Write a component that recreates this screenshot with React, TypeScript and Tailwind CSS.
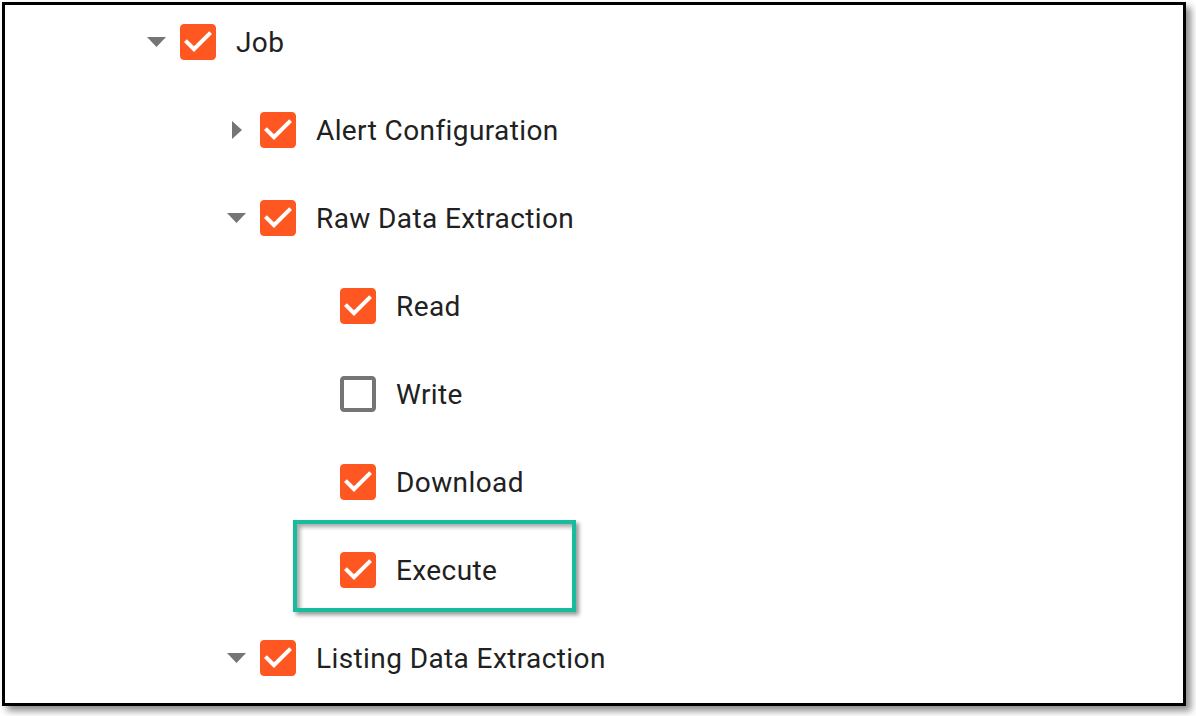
import React from "react";

type Node = {
  label: string;
  level: 0 | 1 | 2;
  checked: boolean;
  arrow?: "down" | "right";
  highlight?: boolean;
};

// rows of the permission tree, top to bottom
const rows: Node[] = [
  { label: "Job", level: 0, checked: true, arrow: "down" },
  { label: "Alert Configuration", level: 1, checked: true, arrow: "right" },
  { label: "Raw Data Extraction", level: 1, checked: true, arrow: "down" },
  { label: "Read", level: 2, checked: true },
  { label: "Write", level: 2, checked: false },
  { label: "Download", level: 2, checked: true },
  { label: "Execute", level: 2, checked: true, highlight: true },
  { label: "Listing Data Extraction", level: 1, checked: true, arrow: "down" },
];

const levelPad = ["pl-[127px]", "pl-[207px]", "pl-[287px]"];

const Checkbox: React.FC<{ checked: boolean }> = ({ checked }) =>
  checked ? (
    <svg width="36" height="36" viewBox="3 3 18 18" className="shrink-0">
      <path
        fill="#ff5722"
        d="M19 3H5c-1.11 0-2 .9-2 2v14c0 1.1.89 2 2 2h14c1.11 0 2-.9 2-2V5c0-1.1-.89-2-2-2zm-9 14l-5-5 1.41-1.41L10 14.17l7.59-7.59L19 8l-9 9z"
      />
    </svg>
  ) : (
    <svg width="36" height="36" viewBox="3 3 18 18" className="shrink-0">
      <path
        fill="#757575"
        d="M19 5v14H5V5h14m0-2H5c-1.1 0-2 .9-2 2v14c0 1.1.9 2 2 2h14c1.1 0 2-.9 2-2V5c0-1.1-.9-2-2-2z"
      />
    </svg>
  );

const Arrow: React.FC<{ dir?: "down" | "right" }> = ({ dir }) => (
  <div className="w-[48px] h-[36px] flex items-center justify-center shrink-0">
    {dir === "down" && (
      <svg width="19" height="10" viewBox="0 0 19 10">
        <polygon points="0,0 19,0 9.5,10" fill="#757575" />
      </svg>
    )}
    {dir === "right" && (
      <svg width="10" height="18" viewBox="0 0 10 18" className="ml-[2px]">
        <polygon points="0,0 10,9 0,18" fill="#757575" />
      </svg>
    )}
  </div>
);

export default function App() {
  return (
    <div className="w-[1196px] h-[716px] bg-white pl-[2px] pt-[2px]">
      <div
        className="w-[1184px] h-[704px] border-[3px] border-black bg-white overflow-hidden shadow-[5px_5px_7px_rgba(0,0,0,0.45)]"
        style={{ fontFamily: "Roboto, 'Liberation Sans', sans-serif" }}
      >
        <div className="flex flex-col gap-[52px] pt-[19px]">
          {rows.map((r) => (
            <div key={r.label} className={`flex items-center ${levelPad[r.level]}`}>
              <div className="relative flex items-center h-[36px]">
                <Arrow dir={r.arrow} />
                <Checkbox checked={r.checked} />
                <span className="ml-[20px] pt-[2px] text-[28px] leading-[34px] tracking-[0.4px] text-[#212121]">
                  {r.label}
                </span>
                {r.highlight && (
                  <div className="absolute left-[1px] top-[-32px] w-[283px] h-[92px] border-[4px] border-[#17bb9e] shadow-[inset_3px_3px_4px_rgba(0,0,0,0.35),3px_3px_4px_rgba(0,0,0,0.4)]" />
                )}
              </div>
            </div>
          ))}
        </div>
      </div>
    </div>
  );
}
